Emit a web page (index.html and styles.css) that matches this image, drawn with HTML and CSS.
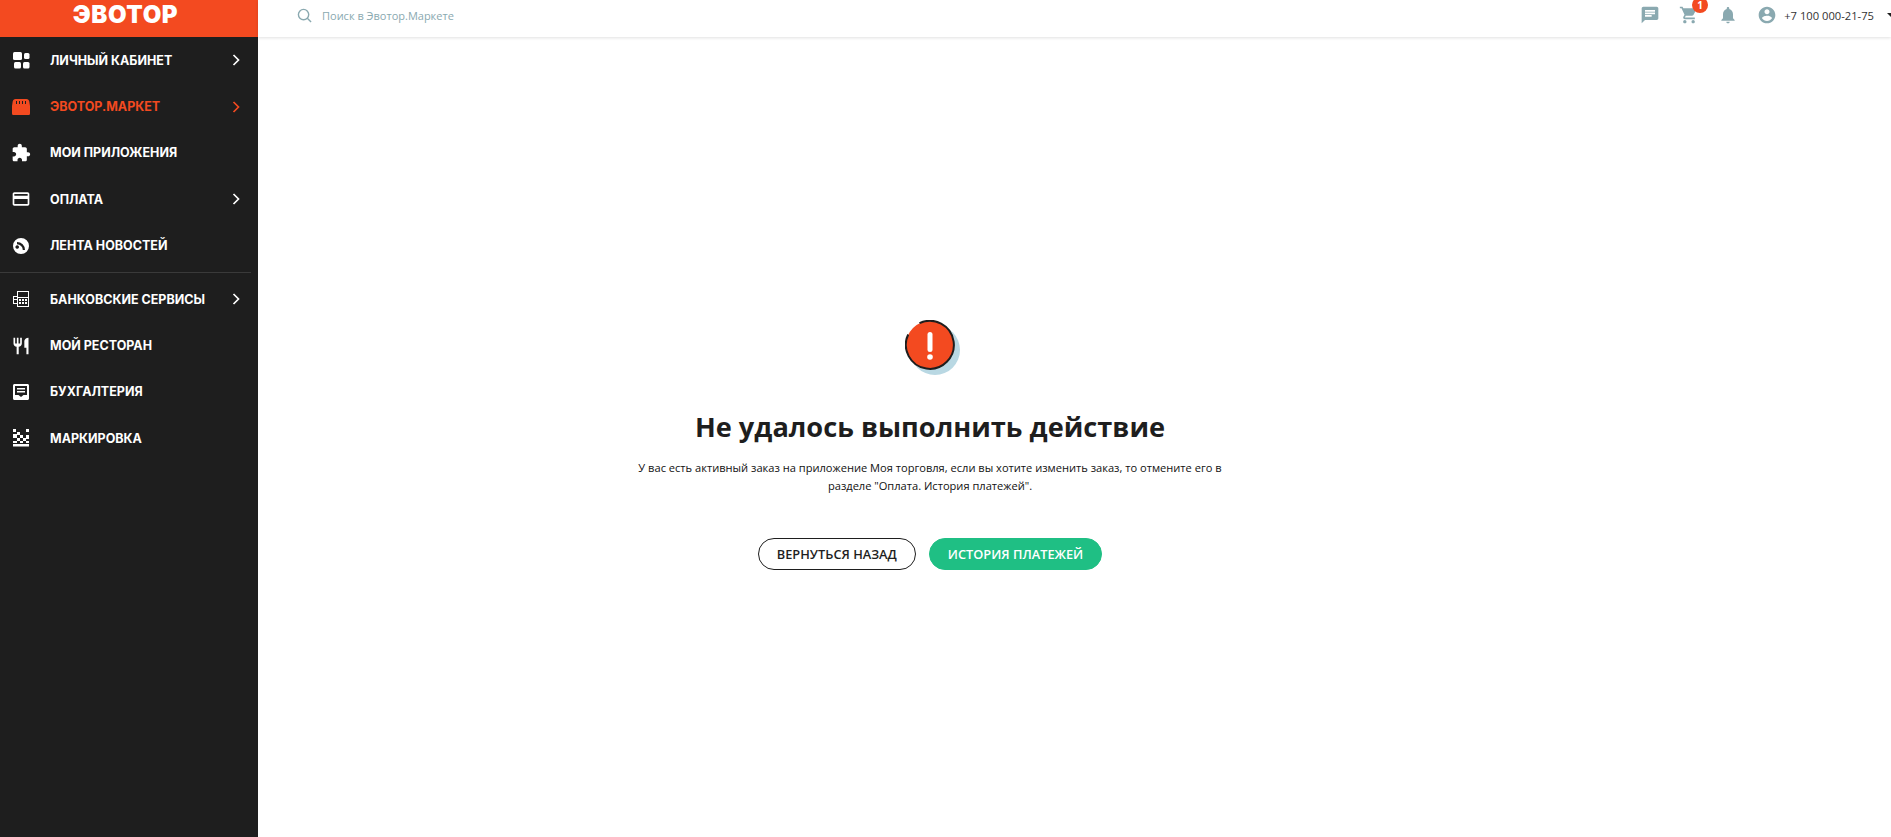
FILE: index.html
```html
<!DOCTYPE html>
<html lang="ru">
<head>
    <meta charset="UTF-8">
    <title>Эвотор.Маркет</title>
    <link rel="stylesheet" href="styles.css">
</head>
<body>
    <div class="page">
        <aside class="sidebar">
            <div class="logo">ЭВОТОР</div>
            <nav class="menu">
                <a class="menu-item">
                    <svg class="menu-icon" viewBox="0 0 18 18"><rect x="1" y="1" width="9" height="8" rx="1.5"/><rect x="12" y="2" width="5.5" height="6" rx="1.5"/><rect x="2" y="11" width="7" height="6.5" rx="1.5"/><rect x="11" y="11" width="6.5" height="6.5" rx="1.5"/></svg>
                    <span class="menu-label">ЛИЧНЫЙ КАБИНЕТ</span>
                    <svg class="chevron" viewBox="0 0 8 12"><path d="M1.5 1l5 5-5 5"/></svg>
                </a>
                <a class="menu-item active">
                    <svg class="menu-icon" viewBox="0 0 18 18"><path fill-rule="evenodd" d="M3.500 1h11C16 1 17 2 17.300 3.500L18 8v7.500c0 1-.8 1.500-1.500 1.500h-15C.8 17 0 16.500 0 15.500V8l.7-4.500C1 2 2 1 3.500 1zM4 3v3h1V3zm3 0v3h1V3zm3 0v3h1V3zm3 0v3h1V3z"/></svg>
                    <span class="menu-label">ЭВОТОР.МАРКЕТ</span>
                    <svg class="chevron" viewBox="0 0 8 12"><path d="M1.5 1l5 5-5 5"/></svg>
                </a>
                <a class="menu-item">
                    <svg class="menu-icon icon-big" viewBox="0 0 24 24"><path d="M20.500 11H19V7c0-1.100-.9-2-2-2h-4V3.500C13 2.120 11.880 1 10.500 1S8 2.120 8 3.500V5H4c-1.100 0-1.990.9-1.990 2v3.800H3.500c1.490 0 2.700 1.210 2.700 2.700s-1.210 2.700-2.700 2.700H2V20c0 1.100.9 2 2 2h3.800v-1.500c0-1.490 1.210-2.700 2.700-2.700 1.490 0 2.700 1.210 2.700 2.700V22H17c1.100 0 2-.9 2-2v-4h1.500c1.380 0 2.500-1.120 2.500-2.500S21.880 11 20.500 11z"/></svg>
                    <span class="menu-label">МОИ ПРИЛОЖЕНИЯ</span>
                </a>
                <a class="menu-item">
                    <svg class="menu-icon icon-big" viewBox="0 0 24 24"><path d="M20 4H4c-1.110 0-1.990.89-1.990 2L2 18c0 1.110.89 2 2 2h16c1.110 0 2-.89 2-2V6c0-1.110-.89-2-2-2zm0 14H4v-6h16v6zm0-10H4V6h16v2z"/></svg>
                    <span class="menu-label">ОПЛАТА</span>
                    <svg class="chevron" viewBox="0 0 8 12"><path d="M1.5 1l5 5-5 5"/></svg>
                </a>
                <a class="menu-item">
                    <svg class="menu-icon" viewBox="0 0 18 18"><path fill-rule="evenodd" d="M9 1a8 8 0 1 1 0 16A8 8 0 0 1 9 1zM5 5v2.200a5.800 5.800 0 0 1 5.800 5.800H13a8 8 0 0 0-8-8zm2 5a1.800 1.800 0 1 0 0 .01z"/></svg>
                    <span class="menu-label">ЛЕНТА НОВОСТЕЙ</span>
                </a>
                <div class="menu-divider"></div>
                <a class="menu-item">
                    <svg class="menu-icon" viewBox="0 0 18 18"><path fill-rule="evenodd" d="M5 1h12v16H5v-3H1V6h4zm1 1v5h10V2zm0 6v8h10V8zM2 7v2h3V7zm0 3v3h3v-3zm5-1h2v2H7zm3 0h2v2h-2zm3 0h2v2h-2zm-6 3h2v2H7zm3 0h2v2h-2zm3 0h2v2h-2z"/></svg>
                    <span class="menu-label">БАНКОВСКИЕ СЕРВИСЫ</span>
                    <svg class="chevron" viewBox="0 0 8 12"><path d="M1.5 1l5 5-5 5"/></svg>
                </a>
                <a class="menu-item">
                    <svg class="menu-icon icon-big" viewBox="0 0 24 24"><path d="M11 9H9V2H7v7H5V2H3v7c0 2.120 1.660 3.840 3.750 3.970V22h2.500v-9.030C11.340 12.840 13 11.120 13 9V2h-2v7zm5-3v8h2.500v8H21V2c-2.760 0-5 2.240-5 4z"/></svg>
                    <span class="menu-label">МОЙ РЕСТОРАН</span>
                </a>
                <a class="menu-item">
                    <svg class="menu-icon" viewBox="0 0 18 18"><path fill-rule="evenodd" d="M2.500 1h13c.8 0 1.500.7 1.500 1.500v13c0 .8-.7 1.500-1.500 1.500h-13c-.8 0-1.500-.7-1.500-1.500v-13C1 1.700 1.700 1 2.500 1zM3 3v9h3.500l2.500 2 2.500-2H15V3zm2 2h8v1.500H5zm0 3h8v1.500H5z"/></svg>
                    <span class="menu-label">БУХГАЛТЕРИЯ</span>
                </a>
                <a class="menu-item">
                    <svg class="menu-icon" viewBox="0 0 18 18"><path d="M1 0h3v3H1zm4 3h3v3H5zm9-3h3v3h-3zM8 6h3v3H8zM1 5h4v4H1zm13 1h3v4h-3zM5 9h3v3H5zm6 0h3v3h-3zM1 12h4v2H1zm7 0h3v2H8zm6 0h3v2h-3zM1 15h16v2.500H1z"/></svg>
                    <span class="menu-label">МАРКИРОВКА</span>
                </a>
            </nav>
        </aside>

        <div class="content">
            <header class="topbar">
                <div class="search">
                    <svg class="search-icon" viewBox="0 0 16 16"><circle cx="7" cy="7" r="5.500"/><path d="M11 11l4 4"/></svg>
                    <span>Поиск в Эвотор.Маркете</span>
                </div>
                <div class="top-actions">
                    <svg class="top-icon" viewBox="0 0 24 24"><path d="M20 2H4c-1.100 0-1.990.9-1.990 2L2 22l4-4h14c1.100 0 2-.9 2-2V4c0-1.100-.9-2-2-2zM6 9h12v2H6V9zm8 5H6v-2h8v2zm4-6H6V6h12v2z"/></svg>
                    <div class="cart">
                        <svg class="top-icon" viewBox="0 0 24 24"><path d="M7 18c-1.100 0-1.990.9-1.990 2S5.900 22 7 22s2-.9 2-2-.9-2-2-2zM1 2v2h2l3.600 7.590-1.350 2.450c-.16.28-.25.61-.25.96 0 1.100.9 2 2 2h12v-2H7.420c-.14 0-.25-.11-.25-.25l.03-.12.9-1.630h7.450c.75 0 1.410-.41 1.750-1.030l3.580-6.490c.08-.14.12-.31.12-.48 0-.55-.45-1-1-1H5.210l-.94-2H1zm16 16c-1.100 0-1.990.9-1.990 2s.89 2 1.990 2 2-.9 2-2-.9-2-2-2z"/></svg>
                        <span class="badge">1</span>
                    </div>
                    <svg class="top-icon" viewBox="0 0 24 24"><path d="M12 22c1.100 0 2-.9 2-2h-4c0 1.100.89 2 2 2zm6-6v-5c0-3.070-1.640-5.640-4.500-6.320V4c0-.83-.67-1.500-1.500-1.500s-1.500.67-1.500 1.500v.68C7.630 5.360 6 7.920 6 11v5l-2 2v1h16v-1l-2-2z"/></svg>
                    <div class="account">
                        <svg class="top-icon" viewBox="0 0 24 24"><path d="M12 2C6.480 2 2 6.480 2 12s4.480 10 10 10 10-4.480 10-10S17.520 2 12 2zm0 3c1.660 0 3 1.340 3 3s-1.340 3-3 3-3-1.340-3-3 1.340-3 3-3zm0 14.200c-2.500 0-4.710-1.280-6-3.220.03-1.990 4-3.080 6-3.080 1.990 0 5.970 1.090 6 3.080-1.290 1.940-3.500 3.220-6 3.220z"/></svg>
                        <span class="phone">+7 100 000-21-75</span>
                        <span class="caret"></span>
                    </div>
                </div>
            </header>

            <main class="message">
                <div class="alert-icon">
                    <svg viewBox="0 0 56 56" width="56" height="56">
                        <circle class="alert-shadow" cx="30" cy="30" r="25"/>
                        <circle class="alert-fill" cx="25" cy="25" r="24"/>
                        <path class="alert-ring" d="M14.500 3.200A24 24 0 1 1 3.200 14.500"/>
                        <rect class="alert-mark" x="22.500" y="12" width="5" height="20" rx="2.500"/>
                        <circle class="alert-mark" cx="25" cy="37" r="2.800"/>
                    </svg>
                </div>
                <h1 class="title">Не удалось выполнить действие</h1>
                <p class="text">У вас есть активный заказ на приложение Моя торговля, если вы хотите изменить заказ, то отмените его в разделе "Оплата. История платежей".</p>
                <div class="buttons">
                    <button class="btn btn-outline">ВЕРНУТЬСЯ НАЗАД</button>
                    <button class="btn btn-green">ИСТОРИЯ ПЛАТЕЖЕЙ</button>
                </div>
            </main>
        </div>
    </div>
</body>
</html>
```

FILE: styles.css
```css
html, body {
    margin: 0;
    padding: 0;
    height: 100%;
    overflow: hidden;
    background-color: #fff;
    font-family: "Open Sans", "Noto Sans", sans-serif;
}

.page {
    display: flex;
    height: 837px;
}

.sidebar {
    width: 258px;
    flex-shrink: 0;
    background-color: #1e1e1e;
}

.logo {
    height: 37px;
    padding-right: 7px;
    background-color: #f34a20;
    color: #fff;
    font-family: Inter, sans-serif;
    font-weight: 900;
    font-size: 24px;
    line-height: 29px;
    letter-spacing: 0.6px;
    text-align: center;
    overflow: hidden;
}

.menu-item {
    display: flex;
    align-items: center;
    height: 46.4px;
    padding: 0 18px 0 12px;
    color: #fff;
}

.menu-item.active {
    color: #f34a20;
}

.menu-icon {
    width: 18px;
    height: 18px;
    fill: currentColor;
    flex-shrink: 0;
}

.icon-big {
    width: 20px;
    height: 20px;
    margin: 0 -1px;
}

.menu-label {
    margin-left: 20px;
    flex: 1;
    font-family: Inter, sans-serif;
    font-weight: 700;
    font-size: 12.500px;
    white-space: nowrap;
}

.chevron {
    width: 8px;
    height: 12px;
    fill: none;
    stroke: currentColor;
    stroke-width: 1.700;
}

.menu-divider {
    height: 1px;
    margin: 3px 7px 3px 0;
    background-color: #3a3a3a;
}

.content {
    flex: 1;
    min-width: 0;
}

.topbar {
    display: flex;
    justify-content: space-between;
    align-items: center;
    height: 30px;
    padding-bottom: 7px;
    box-shadow: 0 1px 3px rgba(0, 0, 0, 0.12);
}

.search {
    display: flex;
    align-items: center;
    margin-left: 39px;
    color: #8aa9b0;
    font-size: 11px;
}

.search-icon {
    width: 15px;
    height: 15px;
    margin-right: 10px;
    fill: none;
    stroke: #8aa9b0;
    stroke-width: 1.500;
}

.top-actions {
    display: flex;
    align-items: center;
    gap: 19px;
    margin-right: -4px;
}

.top-icon {
    display: block;
    width: 20px;
    height: 20px;
    fill: #8aa9b0;
}

.cart {
    position: relative;
}

.badge {
    position: absolute;
    top: -8px;
    right: -9px;
    width: 16px;
    height: 16px;
    border-radius: 50%;
    background-color: #f34a20;
    color: #fff;
    font-size: 10px;
    font-weight: 700;
    line-height: 16px;
    text-align: center;
}

.account {
    display: flex;
    align-items: center;
}

.phone {
    margin-left: 7px;
    color: #333;
    font-size: 11.200px;
    white-space: nowrap;
}

.caret {
    width: 0;
    height: 0;
    margin-left: 13px;
    border-left: 4px solid transparent;
    border-right: 4px solid transparent;
    border-top: 4px solid #1e1e1e;
}

.message {
    display: flex;
    flex-direction: column;
    align-items: center;
    width: 700px;
    margin-left: 322px;
    padding-top: 283px;
}

.alert-icon {
    height: 56px;
    margin-left: 5px;
}

.alert-shadow {
    fill: #b9d8e3;
}

.alert-fill {
    fill: #f34a20;
}

.alert-ring {
    fill: none;
    stroke: #1e1e1e;
    stroke-width: 2;
}

.alert-mark {
    fill: #fff;
}

.title {
    margin: 32px 0 0;
    color: #1e1e1e;
    font-size: 27.200px;
    font-weight: 700;
    line-height: 38px;
}

.text {
    width: 600px;
    margin: 13px 0 0;
    color: #111;
    font-size: 11.100px;
    line-height: 18px;
    text-align: center;
}

.buttons {
    display: flex;
    gap: 13px;
    margin-top: 43px;
}

.btn {
    height: 32px;
    padding: 0 18px;
    border-radius: 16px;
    font-family: "Open Sans", sans-serif;
    font-size: 12.800px;
    font-weight: 600;
}

.btn-outline {
    background-color: #fff;
    border: 1px solid #1e1e1e;
    color: #1e1e1e;
}

.btn-green {
    background-color: #1fbf84;
    border: 1px solid #1fbf84;
    color: #fff;
}
```
